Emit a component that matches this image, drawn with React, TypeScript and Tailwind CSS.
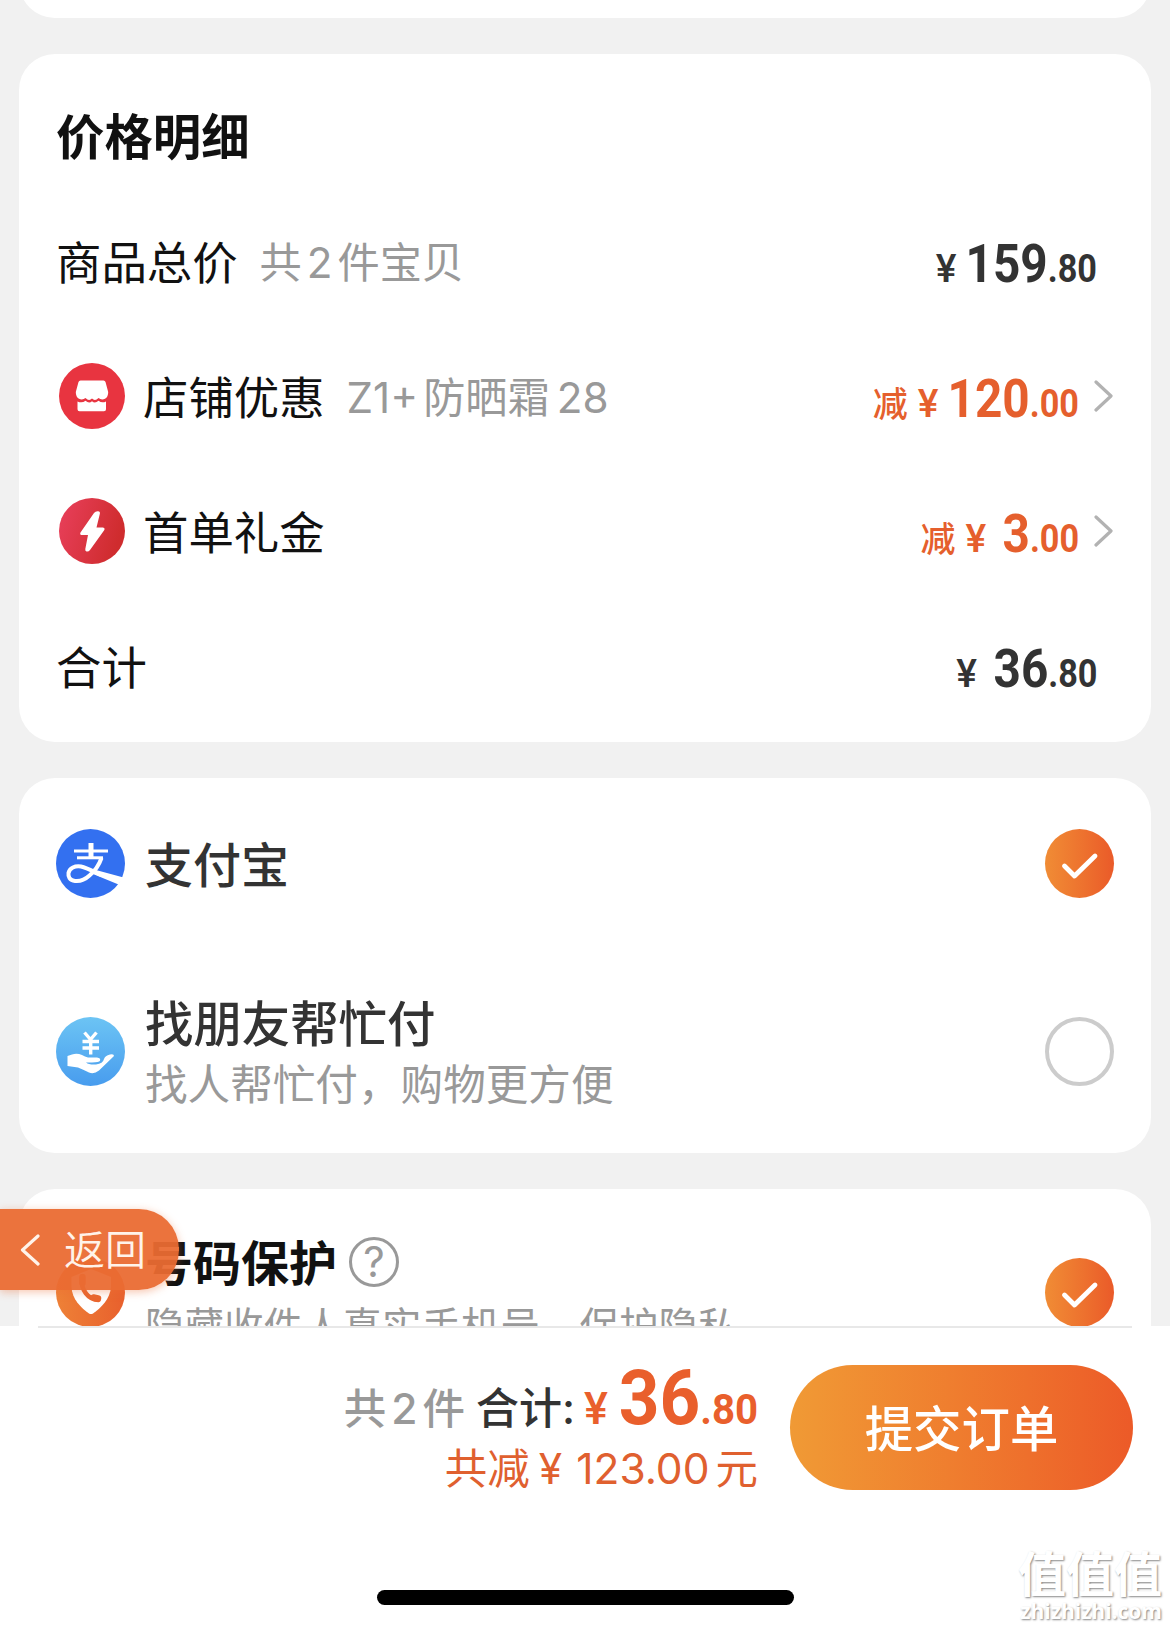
import type { ReactNode } from "react";
import clsx from "clsx";

interface PriceProps {
  integer: string;
  decimal: string;
  prefix?: string;
  discount?: boolean;
}

function Price({ integer, decimal, prefix, discount = false }: PriceProps) {
  // the digits are condensed to 90%, so pull them back over the freed width
  const freed = integer.length * 3 + 5.3;
  // a leading 1 is narrow and sits closer to the currency sign
  const gap = integer.startsWith("1") ? 9 : 16;

  return (
    <div
      className={clsx(
        "flex items-baseline font-['Roboto','Noto_Sans_CJK_SC',sans-serif] leading-none",
        discount ? "text-[#e55f2d]" : "text-[#333]",
      )}
    >
      {prefix && (
        <span className="mr-[10px] text-[35px] font-medium">{prefix}</span>
      )}
      <span className="text-[39px] font-medium">¥</span>
      <span
        className="inline-block origin-right scale-x-90 font-bold"
        style={{ marginLeft: gap - freed }}
      >
        <span className="text-[53px]">{integer}</span>
        <span className="text-[38px]">.{decimal}</span>
      </span>
    </div>
  );
}

function ChevronRight() {
  return (
    <svg width="20" height="32" viewBox="0 0 20 32" fill="none">
      <path
        d="M2 2 L17 16 L2 30"
        stroke="#b2b2b2"
        strokeWidth="3.2"
        strokeLinecap="round"
        strokeLinejoin="round"
      />
    </svg>
  );
}

function ShopIcon() {
  return (
    <svg width="66" height="66" viewBox="0 0 66 66">
      <circle cx="33" cy="33" r="33" fill="#e83440" />
      <path
        d="M21.5 17.5 H44.5 Q46 17.5 46.5 19 L49.2 29 Q49.2 34 46 35.8 Q42.5 37.5 39.5 35 Q36 38.5 33 35.5 Q30 38.5 26.5 35 Q23.5 37.5 20 35.8 Q16.8 34 16.8 29 L19.5 19 Q20 17.5 21.5 17.5 Z"
        fill="#fff"
      />
      <path
        d="M18.5 38.5 Q23 40.5 26.5 37.8 Q30 41 33 38.3 Q36 41 39.5 37.8 Q43 40.5 47 38.5 V46.3 Q47 48.3 45 48.3 H20.5 Q18.5 48.3 18.5 46.3 Z"
        fill="#fff"
      />
    </svg>
  );
}

function BoltIcon() {
  return (
    <svg width="66" height="66" viewBox="0 0 66 66">
      <defs>
        <linearGradient id="bolt" x1="0" y1="0" x2="1" y2="0.3">
          <stop offset="0" stopColor="#e9405c" />
          <stop offset="1" stopColor="#cf2c2e" />
        </linearGradient>
      </defs>
      <circle cx="33" cy="33" r="33" fill="url(#bolt)" />
      <path
        d="M35 15 Q36.5 13 39 13.2 Q41.5 13.5 40.8 16 L37.5 29.5 H44 Q46.5 30 45 32.5 L31 52 Q29.5 54 27.5 53.5 Q26 53 26.3 51 L29 37 H22.5 Q20.5 36.5 21.5 34.5 Z"
        fill="#fff"
      />
    </svg>
  );
}

function AlipayIcon() {
  return (
    <svg width="69" height="69" viewBox="0 0 69 69" fill="none">
      <circle cx="34.5" cy="34.5" r="34.5" fill="#3370f0" />
      <path d="M18 22 H52" stroke="#fff" strokeWidth="3.2" />
      <path d="M21 28.8 H47" stroke="#fff" strokeWidth="3" />
      <path d="M32.5 14 H37.5 V29 H32.5 Z" fill="#fff" />
      <path
        d="M45.5 29 C43 36 39 42 33.5 46.5 C28 51.5 23 52.5 19 52 C13.5 51.5 12 47.5 12.5 44 C13.5 39 19 36.5 25 37.5 C32 39 38 43 45 46"
        stroke="#fff"
        strokeWidth="4"
      />
      <path d="M38 40.5 L67.5 48.5 L62.5 55.5 L37 45 Z" fill="#fff" />
    </svg>
  );
}

function FriendPayIcon() {
  return (
    <svg width="69" height="69" viewBox="0 0 69 69" fill="none">
      <defs>
        <linearGradient id="friend" x1="0" y1="0" x2="0" y2="1">
          <stop offset="0" stopColor="#6cc4f4" />
          <stop offset="1" stopColor="#489cee" />
        </linearGradient>
      </defs>
      <circle cx="34.5" cy="34.5" r="34.5" fill="url(#friend)" />
      <path
        d="M28.5 15.5 L34.5 22.5 L40.5 15.5 M26.5 24.5 H43 M26.5 31 H43 M34.7 22.5 V37.5"
        stroke="#fff"
        strokeWidth="3.4"
      />
      <path
        d="M11.5 39 L16 37.5 Q21 36 26 38 Q29 39.7 32 40.5 H41 Q45 41 44 43.8 Q43 45.5 36 45.5 H30 Q33 48 40 47.5 Q47 46.5 48 42 Q49 38.5 54 37.5 Q58 36.5 58 39 L43 53.5 Q38 57.5 33 55.5 Q28 53 22 50.5 L11.5 49 Z"
        fill="#fff"
      />
    </svg>
  );
}

function PhoneIcon() {
  return (
    <svg width="69" height="69" viewBox="0 0 69 69" fill="none">
      <defs>
        <linearGradient id="phone" x1="0" y1="0" x2="1" y2="0">
          <stop offset="0" stopColor="#ee8137" />
          <stop offset="1" stopColor="#e8602d" />
        </linearGradient>
      </defs>
      <circle cx="34.5" cy="34.5" r="34.5" fill="url(#phone)" />
      <path
        d="M35 11 L55 19 V29 C54 41 45 50 37 55.5 Q35 56.5 33 55.5 C25 50 16 41 15.5 29 V19 Z"
        fill="#fff"
      />
      <path
        d="M25.5 20 C25 32 32 41.5 42.5 42"
        stroke="#e9662f"
        strokeWidth="4.5"
        strokeLinecap="round"
      />
      <path
        d="M26.5 19 V25 M37.5 39.5 L42 40.5"
        stroke="#e9662f"
        strokeWidth="6.5"
        strokeLinecap="round"
      />
    </svg>
  );
}

function Radio({ checked = false }: { checked?: boolean }) {
  if (!checked) {
    return (
      <span className="ml-auto size-[69px] shrink-0 rounded-full border-4 border-[#ccc]" />
    );
  }
  return (
    <span className="ml-auto size-[69px] shrink-0 rounded-full bg-linear-to-r from-[#f08c35] to-[#ea5a29]">
      <svg width="69" height="69" viewBox="0 0 69 69" fill="none">
        <path
          d="M19.5 37 L29.5 47 L50 27"
          stroke="#fff"
          strokeWidth="4.8"
          strokeLinecap="round"
          strokeLinejoin="round"
        />
      </svg>
    </span>
  );
}

interface PriceRowProps {
  icon?: ReactNode;
  label: string;
  note?: ReactNode;
  price: ReactNode;
  arrow?: boolean;
}

function PriceRow({ icon, label, note, price, arrow = false }: PriceRowProps) {
  return (
    <div
      className={clsx(
        "flex h-[135px] items-center",
        arrow ? "pr-[37px]" : "pr-[54px]",
      )}
    >
      {icon && <span className="mr-[18px] ml-[3px] pb-[3px]">{icon}</span>}
      <span className="pt-[2px] text-[45.4px] leading-none text-[#111]">
        {label}
      </span>
      {note && (
        <span className="ml-[22px] flex pt-[1px] text-[42.2px] leading-none text-[#999]">
          {note}
        </span>
      )}
      <span className="ml-auto pt-[3px]">{price}</span>
      {arrow && (
        <span className="ml-[15px] pb-[4px]">
          <ChevronRight />
        </span>
      )}
    </div>
  );
}

export default function App() {
  return (
    <div className="relative flex h-[1629px] w-[1170px] flex-col overflow-hidden bg-[#f1f1f1] font-['Inter','Noto_Sans_CJK_SC',sans-serif] whitespace-nowrap">
      <main className="flex h-[1326px] shrink-0 flex-col gap-[36px] overflow-hidden px-[19px]">
        <div className="-mt-[72px] h-[90px] shrink-0 rounded-[36px] bg-white" />

        <section className="h-[688px] shrink-0 rounded-[36px] bg-white pl-[37px]">
          <h2 className="h-[141px] pt-[60px] text-[48.4px] leading-none font-semibold text-[#111]">
            价格明细
          </h2>
          <PriceRow
            label="商品总价"
            note={
              <>
                共<span className="mx-[5px]">2</span>件宝贝
              </>
            }
            price={<Price integer="159" decimal="80" />}
          />
          <PriceRow
            icon={<ShopIcon />}
            label="店铺优惠"
            note={
              <>
                <span className="mr-[5px]">Z1+</span>防晒霜
                <span className="ml-[7px]">28</span>
              </>
            }
            price={<Price prefix="减" integer="120" decimal="00" discount />}
            arrow
          />
          <PriceRow
            icon={<BoltIcon />}
            label="首单礼金"
            price={<Price prefix="减" integer="3" decimal="00" discount />}
            arrow
          />
          <PriceRow label="合计" price={<Price integer="36" decimal="80" />} />
        </section>

        <section className="h-[375px] shrink-0 rounded-[36px] bg-white px-[37px]">
          <div className="flex h-[171px] items-center">
            <AlipayIcon />
            <span className="ml-[20px] pt-[4px] text-[48px] leading-none font-medium text-[#333]">
              支付宝
            </span>
            <Radio checked />
          </div>
          <div className="flex h-[204px] items-center">
            <FriendPayIcon />
            <div className="ml-[20px] pt-[8px]">
              <p className="text-[48.4px] leading-[60px] font-medium text-[#333]">
                找朋友帮忙付
              </p>
              <p className="text-[42.6px] leading-[60px] text-[#999]">
                找人帮忙付，购物更方便
              </p>
            </div>
            <Radio />
          </div>
        </section>

        <section className="flex h-[206px] shrink-0 items-center rounded-t-[36px] bg-white px-[37px]">
          <PhoneIcon />
          <div className="ml-[20px] pt-[7px]">
            <div className="flex h-[60px] items-center">
              <span className="pt-[4px] text-[48px] leading-none font-semibold text-[#111]">
                号码保护
              </span>
              <span className="ml-[12px] flex size-[50px] items-center justify-center rounded-full border-[3.5px] border-[#999] text-[42px] leading-none text-[#999]">
                ?
              </span>
            </div>
            <p className="mt-[4px] text-[39.5px] leading-[63px] text-[#999]">
              隐藏收件人真实手机号，保护隐私
            </p>
          </div>
          <Radio checked />
        </section>
      </main>

      <footer className="flex flex-1 flex-col bg-white">
        <div className="mx-[38px] h-[2px] bg-[#e8e8e8]" />
        <div className="flex h-[162px] justify-end pt-[37px] pr-[37px]">
          <div className="-mt-[5px] mr-[32px] flex flex-col items-end">
            <div className="flex h-[90px] items-baseline leading-none">
              <span className="text-[42.5px] font-medium text-[#999]">
                共<span className="mx-[5px]">2</span>件
              </span>
              <span className="ml-[11px] text-[43px] font-medium text-[#333]">
                合计:
              </span>
              <span className="ml-[9px] font-['Roboto',sans-serif] text-[45px] font-medium text-[#e95f2c]">
                ¥
              </span>
              <span className="ml-[1px] inline-block origin-right scale-x-[0.935] font-['Roboto',sans-serif] font-bold text-[#e95f2c]">
                <span className="text-[76px]">36</span>
                <span className="text-[43px]">.80</span>
              </span>
            </div>
            <div className="flex items-baseline text-[42.5px] leading-none text-[#e0602f]">
              共减
              <span className="ml-[9px]">¥</span>
              <span className="mr-[6px] ml-[14px]">123.00</span>元
            </div>
          </div>
          <button
            type="button"
            className="h-[125px] w-[343px] rounded-full bg-linear-to-r from-[#f09a35] to-[#ec5a28] pt-[6px] text-[48.4px] leading-none font-medium text-white"
          >
            提交订单
          </button>
        </div>
        <div className="mx-auto mt-[100px] h-[15px] w-[417px] rounded-full bg-black" />
      </footer>

      {/* floating return tab */}
      <div className="absolute top-[1209px] left-0 flex h-[81px] w-[179px] items-center rounded-r-[40px] bg-[#ea6c33]/95 pl-[20px] shadow-[0_2px_8px_rgba(234,108,51,0.4)]">
        <svg width="20" height="32" viewBox="0 0 20 32" fill="none">
          <path
            d="M18 2 L2.5 16 L18 30"
            stroke="#fff3ea"
            strokeWidth="3.2"
            strokeLinecap="round"
            strokeLinejoin="round"
          />
        </svg>
        <span className="ml-[24px] pt-[2px] text-[41px] leading-none font-[350] text-[#fff3ea]">
          返回
        </span>
      </div>

      {/* watermark */}
      <div className="absolute right-[8px] bottom-[7px] flex flex-col items-end leading-none font-bold text-white [text-shadow:1px_1px_2px_#888]">
        <span className="mb-[2px] text-[48px]">值值值</span>
        <span className="font-['Open_Sans',sans-serif] text-[21px]">
          zhizhizhi.com
        </span>
      </div>
    </div>
  );
}
